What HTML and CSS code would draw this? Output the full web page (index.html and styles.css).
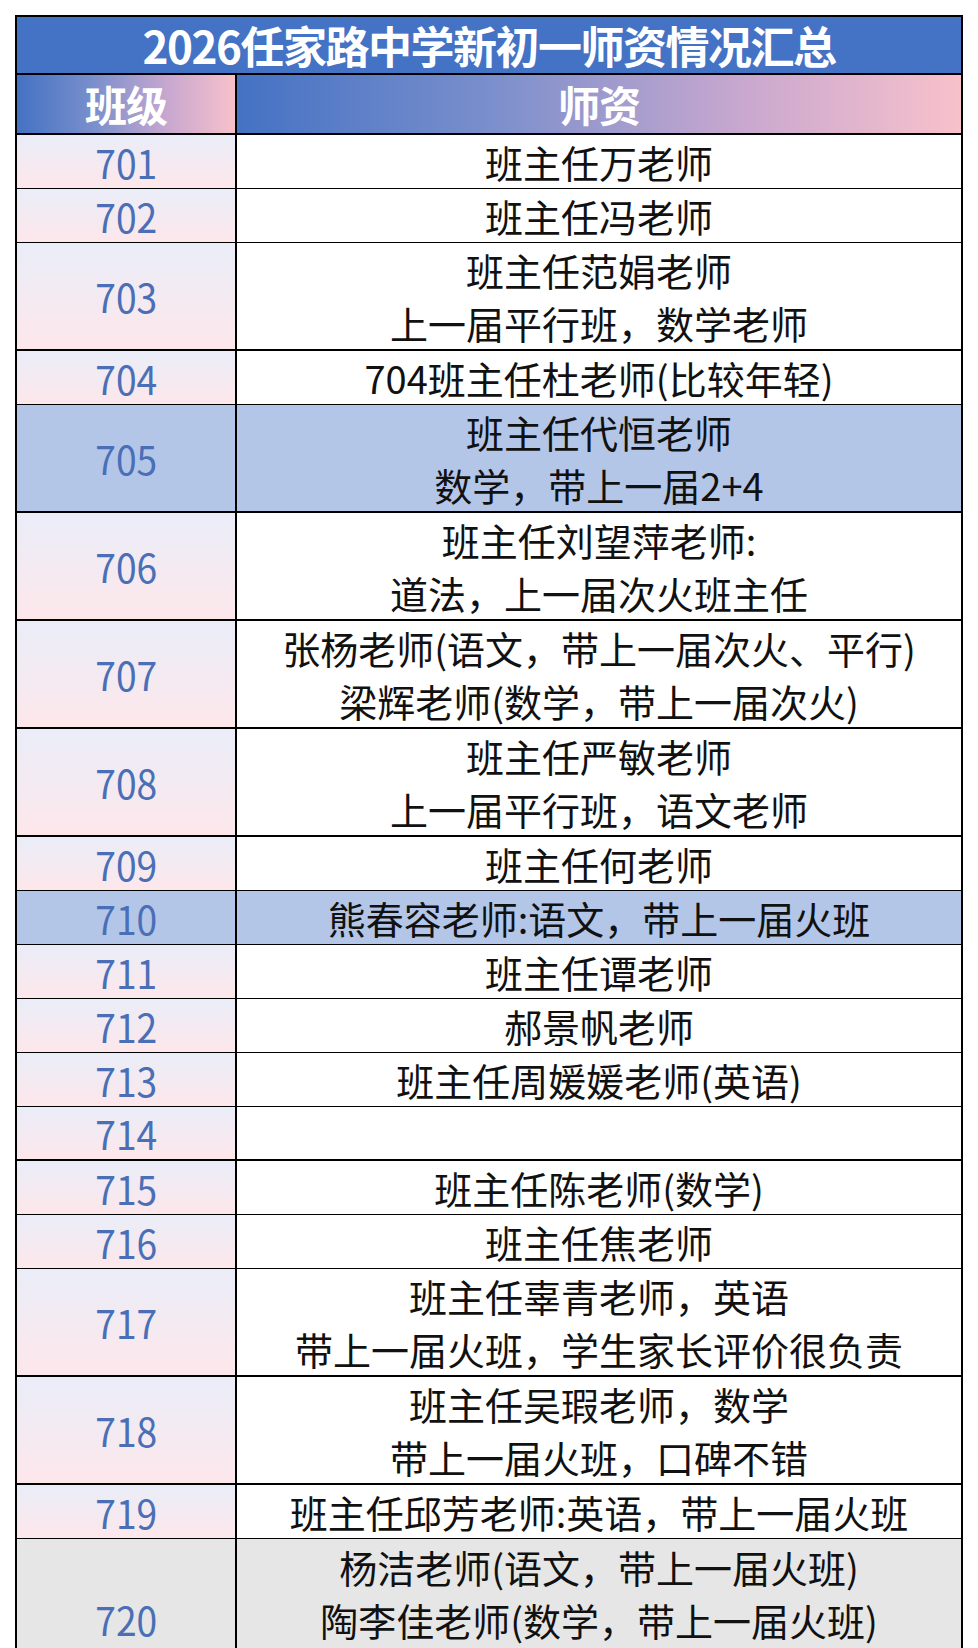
FILE: index.html
```html
<!DOCTYPE html>
<html lang="zh-CN">
<head>
<meta charset="utf-8">
<title>2026任家路中学新初一师资情况汇总</title>
<link rel="stylesheet" href="styles.css">
</head>
<body>
<div class="sheet">
  <div class="title">2026任家路中学新初一师资情况汇总</div>
  <div class="row head">
    <div class="hcell">班级</div>
    <div class="hcell">师资</div>
  </div>
  <div class="row single"><div class="no"><span>701</span></div><div class="info">班主任万老师</div></div>
  <div class="row single"><div class="no"><span>702</span></div><div class="info">班主任冯老师</div></div>
  <div class="row double"><div class="no"><span>703</span></div><div class="info">班主任范娟老师<br>上一届平行班，数学老师</div></div>
  <div class="row single"><div class="no"><span>704</span></div><div class="info">704班主任杜老师(比较年轻)</div></div>
  <div class="row double blue"><div class="no"><span>705</span></div><div class="info">班主任代恒老师<br>数学，带上一届2+4</div></div>
  <div class="row double"><div class="no"><span>706</span></div><div class="info">班主任刘望萍老师:<br>道法，上一届次火班主任</div></div>
  <div class="row double"><div class="no"><span>707</span></div><div class="info">张杨老师(语文，带上一届次火、平行)<br>梁辉老师(数学，带上一届次火)</div></div>
  <div class="row double"><div class="no"><span>708</span></div><div class="info">班主任严敏老师<br>上一届平行班，语文老师</div></div>
  <div class="row single"><div class="no"><span>709</span></div><div class="info">班主任何老师</div></div>
  <div class="row single blue"><div class="no"><span>710</span></div><div class="info">熊春容老师:语文，带上一届火班</div></div>
  <div class="row single"><div class="no"><span>711</span></div><div class="info">班主任谭老师</div></div>
  <div class="row single"><div class="no"><span>712</span></div><div class="info">郝景帆老师</div></div>
  <div class="row single"><div class="no"><span>713</span></div><div class="info">班主任周媛媛老师(英语)</div></div>
  <div class="row single"><div class="no"><span>714</span></div><div class="info"></div></div>
  <div class="row single"><div class="no"><span>715</span></div><div class="info">班主任陈老师(数学)</div></div>
  <div class="row single"><div class="no"><span>716</span></div><div class="info">班主任焦老师</div></div>
  <div class="row double"><div class="no"><span>717</span></div><div class="info">班主任辜青老师，英语<br>带上一届火班，学生家长评价很负责</div></div>
  <div class="row double"><div class="no"><span>718</span></div><div class="info">班主任吴瑕老师，数学<br>带上一届火班，口碑不错</div></div>
  <div class="row single"><div class="no"><span>719</span></div><div class="info">班主任邱芳老师:英语，带上一届火班</div></div>
  <div class="row triple gray"><div class="no"><span>720</span></div><div class="info">杨洁老师(语文，带上一届火班)<br>陶李佳老师(数学，带上一届火班)<br>&nbsp;</div></div>
</div>
</body>
</html>
```
FILE: styles.css
```css
html, body {
  margin: 0;
  padding: 0;
  background: #ffffff;
}

body {
  font-family: "Noto Sans CJK SC", "Noto Sans", sans-serif;
  color: #111111;
}

.sheet {
  box-sizing: border-box;
  width: 948px;
  margin: 15px 0 0 15px;
  border-left: 2px solid #000;
  border-top: 2px solid #000;
}

.title {
  box-sizing: border-box;
  height: 60px;
  margin-top: -2px;
  border-top: 2px solid #000;
  border-right: 2px solid #000;
  border-bottom: 2px solid #000;
  background: #4472c4;
  color: #ffffff;
  font-weight: 700;
  font-size: 44px;
  letter-spacing: -1.5px;
  line-height: 56px;
  text-align: center;
}

.row {
  display: grid;
  grid-template-columns: 220px 726px;
}

.row > div {
  box-sizing: border-box;
  border-right: 2px solid #000;
  border-bottom: 2px solid #000;
  display: flex;
  align-items: center;
  justify-content: center;
  text-align: center;
}

.head { height: 60px; }
.single { height: 54px; }
.double { height: 108px; }
.triple { height: 162px; }

.hcell {
  background: linear-gradient(to right, #4472c4 0%, #7a8fcc 35%, #c9a8cf 70%, #f8c1cb 100%);
  color: #ffffff;
  font-weight: 700;
  font-size: 42px;
  letter-spacing: -1px;
  line-height: 58px;
}

.no {
  background: linear-gradient(to bottom, #eaedf8 0%, #fde7eb 100%);
  color: #4a6fb6;
  font-size: 40px;
  line-height: 50px;
}

.no span {
  display: inline-block;
  transform: scaleX(0.93);
}

.info {
  background: #ffffff;
  font-size: 38px;
  line-height: 53px;
}

.blue > div,
.blue > .no {
  background: #b4c6e7;
}

.gray > div,
.gray > .no {
  background: #e6e6e6;
}
```
